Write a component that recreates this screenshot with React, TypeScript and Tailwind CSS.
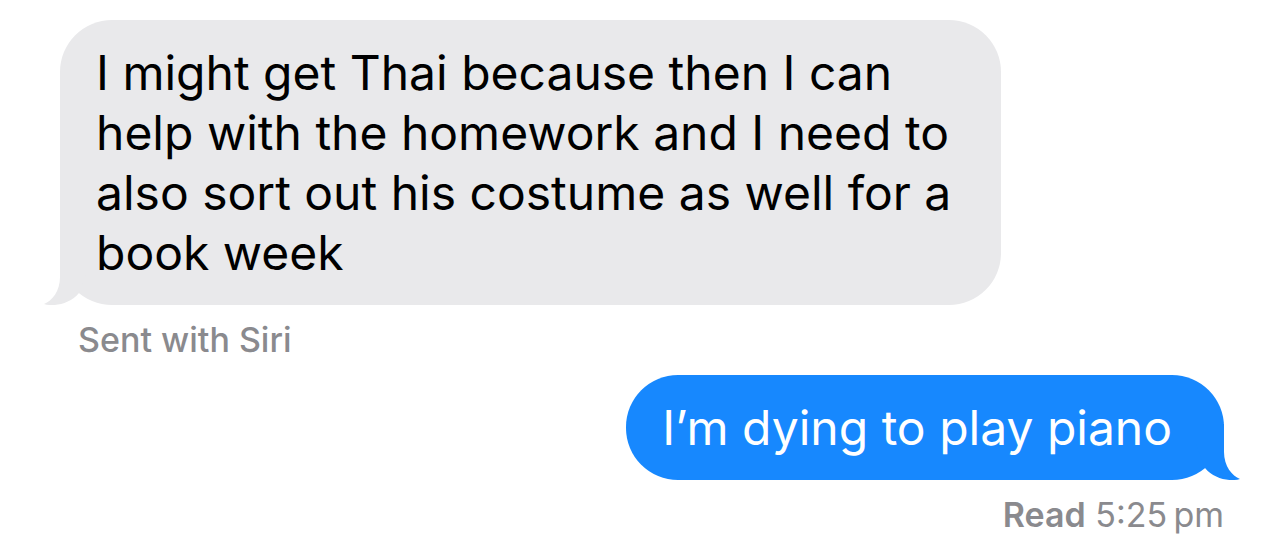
import React from 'react';

function BubbleTail({ className }: { className: string }) {
  return (
    <svg viewBox="0 0 44 56" className={className} aria-hidden="true">
      <path d="M16 0V28C16 42 8 52 0 55C10 58 26 55 35 44L44 20V0Z" fill="currentColor" />
    </svg>
  );
}

export default function App() {
  return (
    <main className="min-h-screen bg-white px-[60px] pt-5 font-['Inter',sans-serif] text-black">
      {/* Received */}
      <div className="relative w-fit max-w-[941px] rounded-[52px] bg-[#e9e9eb] pt-[23px] pr-10 pb-[22px] pl-9">
        <BubbleTail className="absolute bottom-0 -left-4 h-14 w-11 text-[#e9e9eb]" />
        <p className="relative text-[48px] leading-[60px]">
          I might get Thai because then I can help with the homework and I need to also sort out his costume as well for a book week
        </p>
      </div>
      <p className="mt-[15px] pl-[18px] text-[34px] leading-10 font-medium text-[#8a8a8e]">Sent with Siri</p>

      {/* Sent */}
      <div className="mt-[15px] flex flex-col items-end">
        <div className="relative rounded-[52px] bg-[#1788fe] pt-[23px] pr-[52px] pb-[22px] pl-9">
          <BubbleTail className="absolute -right-4 bottom-0 h-14 w-11 -scale-x-100 text-[#1788fe]" />
          <p className="relative text-[48px] leading-[60px] text-white">I’m dying to play piano</p>
        </div>
        <p className="mt-[15px] text-[34px] leading-10 text-[#8a8a8e]">
          <span className="font-semibold">Read</span> 5:25{'\u202f'}pm
        </p>
      </div>
    </main>
  );
}
